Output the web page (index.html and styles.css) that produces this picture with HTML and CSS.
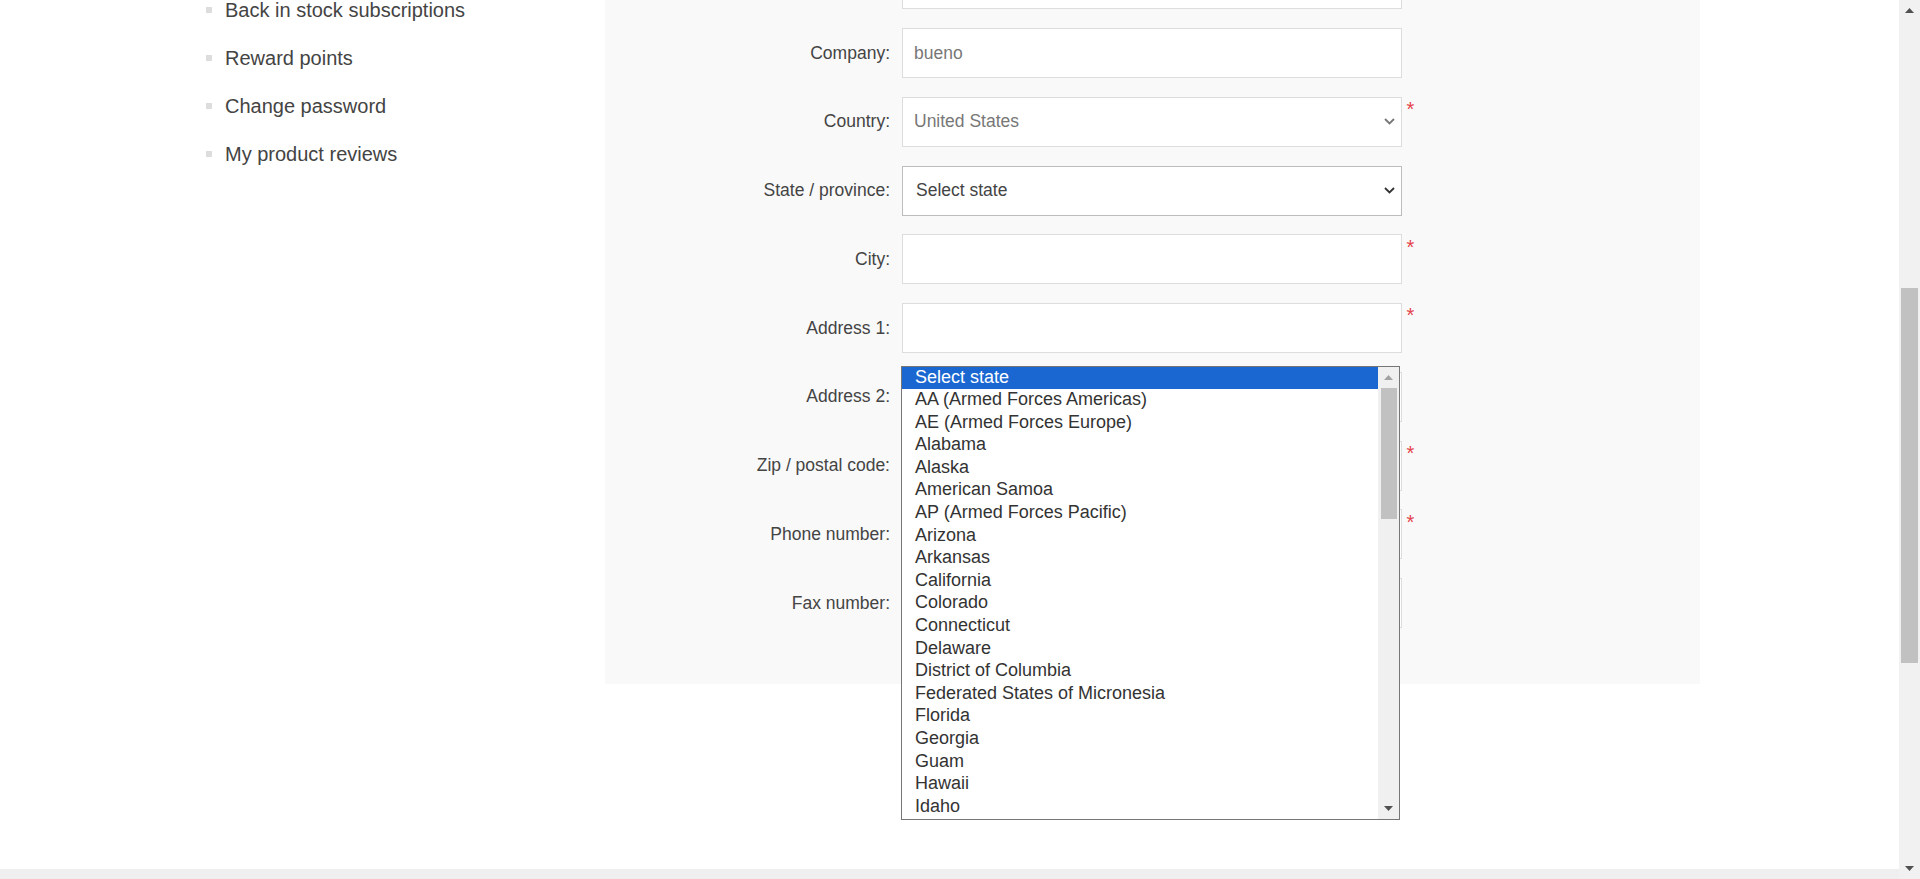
FILE: index.html
```html
<!DOCTYPE html>
<html lang="en">
<head>
<meta charset="utf-8">
<title>Address</title>
<link rel="stylesheet" href="styles.css">
</head>
<body>
<div class="screen">
  <div class="viewport-col">
    <div class="viewport">
      <div class="page">
        <aside class="sidebar">
          <ul class="nav-list">
            <li class="nav-item"><span class="bullet"></span>Back in stock subscriptions</li>
            <li class="nav-item"><span class="bullet"></span>Reward points</li>
            <li class="nav-item"><span class="bullet"></span>Change password</li>
            <li class="nav-item"><span class="bullet"></span>My product reviews</li>
          </ul>
        </aside>
        <section class="panel">
          <div class="form">
            <div class="row"><span class="label"></span><div class="field"></div></div>
            <div class="row"><label class="label">Company:</label><div class="field">bueno</div></div>
            <div class="row"><label class="label">Country:</label><div class="field">United States<svg class="chev" width="11" height="7" viewBox="0 0 11 7"><path d="M1 1 L5.5 5.5 L10 1" stroke="#777" stroke-width="1.8" fill="none"/></svg></div><span class="req">*</span></div>
            <div class="row"><label class="label">State / province:</label>
              <div class="field field-dark">Select state<svg class="chev" width="11" height="7" viewBox="0 0 11 7"><path d="M1 1 L5.5 5.5 L10 1" stroke="#333" stroke-width="1.8" fill="none"/></svg>
                <div class="popup">
                  <ul class="options">
                    <li class="option selected">Select state</li>
                    <li class="option">AA (Armed Forces Americas)</li>
                    <li class="option">AE (Armed Forces Europe)</li>
                    <li class="option">Alabama</li>
                    <li class="option">Alaska</li>
                    <li class="option">American Samoa</li>
                    <li class="option">AP (Armed Forces Pacific)</li>
                    <li class="option">Arizona</li>
                    <li class="option">Arkansas</li>
                    <li class="option">California</li>
                    <li class="option">Colorado</li>
                    <li class="option">Connecticut</li>
                    <li class="option">Delaware</li>
                    <li class="option">District of Columbia</li>
                    <li class="option">Federated States of Micronesia</li>
                    <li class="option">Florida</li>
                    <li class="option">Georgia</li>
                    <li class="option">Guam</li>
                    <li class="option">Hawaii</li>
                    <li class="option">Idaho</li>
                  </ul>
                  <div class="pscroll">
                    <div class="arrow-box"><svg width="9" height="5" viewBox="0 0 9 5"><path d="M0 5 L4.5 0 L9 5Z" fill="#a3a3a3"/></svg></div>
                    <div class="pthumb"></div>
                    <div class="spacer"></div>
                    <div class="arrow-box"><svg width="9" height="5" viewBox="0 0 9 5"><path d="M0 0 L4.5 5 L9 0Z" fill="#505050"/></svg></div>
                  </div>
                </div>
              </div>
            </div>
            <div class="row"><label class="label">City:</label><div class="field"></div><span class="req">*</span></div>
            <div class="row"><label class="label">Address 1:</label><div class="field"></div><span class="req">*</span></div>
            <div class="row"><label class="label">Address 2:</label><div class="field"></div></div>
            <div class="row"><label class="label">Zip / postal code:</label><div class="field"></div><span class="req">*</span></div>
            <div class="row"><label class="label">Phone number:</label><div class="field"></div><span class="req">*</span></div>
            <div class="row"><label class="label">Fax number:</label><div class="field"></div></div>
          </div>
        </section>
      </div>
    </div>
    <div class="hbar"></div>
  </div>
  <div class="vbar">
    <div class="arrow-box"><svg width="9" height="5" viewBox="0 0 9 5"><path d="M0 5 L4.5 0 L9 5Z" fill="#505050"/></svg></div>
    <div class="vthumb"></div>
    <div class="spacer"></div>
    <div class="arrow-box"><svg width="9" height="5" viewBox="0 0 9 5"><path d="M0 0 L4.5 5 L9 0Z" fill="#505050"/></svg></div>
  </div>
</div>
</body>
</html>
```
FILE: styles.css
```css
html, body {
  margin: 0;
  padding: 0;
  height: 100%;
  overflow: hidden;
  background: #fff;
}
body {
  font-family: "Liberation Sans", Arial, sans-serif;
}
.screen {
  display: flex;
  height: 879px;
}
.viewport-col {
  flex: 1;
  min-width: 0;
  display: flex;
  flex-direction: column;
}
.viewport {
  flex: 1;
  overflow: hidden;
}
.hbar {
  height: 10px;
  background: #efefef;
}
.page {
  display: flex;
  align-items: flex-start;
  padding-left: 206px;
}
.sidebar {
  width: 399px;
  flex: none;
  margin-top: -14px;
}
.nav-list {
  list-style: none;
  margin: 0;
  padding: 0;
}
.nav-item {
  display: flex;
  align-items: center;
  height: 48px;
  font-size: 20px;
  color: #444;
  white-space: nowrap;
}
.bullet {
  flex: none;
  width: 6px;
  height: 6px;
  background: #ddd;
  margin-right: 13px;
}
.panel {
  flex: none;
  width: 1095px;
  box-sizing: border-box;
  margin-top: -70.75px;
  padding: 30px 0 37.25px;
  background: #f9f9f9;
}
.row {
  display: flex;
  align-items: center;
  height: 50px;
  margin-bottom: 18.75px;
}
.label {
  flex: none;
  width: 285px;
  margin-right: 12px;
  text-align: right;
  font-size: 17.5px;
  color: #444;
}
.field {
  flex: none;
  position: relative;
  width: 500px;
  height: 50px;
  box-sizing: border-box;
  border: 1px solid #ddd;
  background: #fff;
  display: flex;
  align-items: center;
  justify-content: space-between;
  padding: 0 6px 0 11px;
  font-size: 17.5px;
  color: #777;
}
.field-dark {
  border-color: #bdbdbd;
  color: #444;
  padding-left: 13px;
}
.chev {
  flex: none;
}
.req {
  align-self: flex-start;
  margin-left: 4.5px;
  margin-top: 2.4px;
  font-size: 20px;
  line-height: 20px;
  color: #e4434b;
}
.popup {
  position: absolute;
  top: 199px;
  left: -2px;
  width: 499px;
  height: 454px;
  box-sizing: border-box;
  border: 1px solid #767676;
  background: #fff;
  display: flex;
  z-index: 10;
}
.options {
  flex: 1;
  list-style: none;
  margin: 0;
  padding: 0;
  overflow: hidden;
}
.option {
  height: 22.6px;
  line-height: 20px;
  padding-left: 13px;
  font-size: 18px;
  color: #333;
  white-space: nowrap;
}
.option.selected {
  background: #1a67d2;
  color: #fff;
}
.pscroll {
  flex: none;
  width: 21px;
  background: #f0f0f0;
  display: flex;
  flex-direction: column;
  align-items: center;
}
.arrow-box {
  flex: none;
  width: 21px;
  height: 21px;
  display: flex;
  align-items: center;
  justify-content: center;
}
.pthumb {
  flex: none;
  width: 16px;
  height: 131px;
  background: #c1c1c1;
}
.spacer {
  flex: 1;
}
.vbar {
  flex: none;
  width: 21px;
  background: #f1f1f1;
  display: flex;
  flex-direction: column;
  align-items: center;
}
.vthumb {
  flex: none;
  width: 17px;
  height: 375px;
  margin-top: 267px;
  background: #c1c1c1;
}
```
